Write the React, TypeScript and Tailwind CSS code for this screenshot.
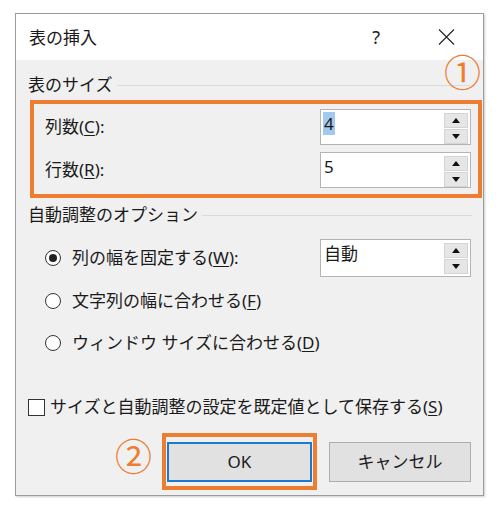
import React from "react";

const font = "font-['Noto_Sans','Noto_Sans_CJK_JP',sans-serif]";

function Spinner() {
  return (
    <div className="flex flex-col gap-px w-[24px] mt-[3px] mr-[2px]">
      <div className="h-[15px] bg-[#e6e6e6] border border-[#d4d4d4] flex items-center justify-center">
        <svg width="8" height="5" viewBox="0 0 8 5">
          <path d="M0 5 L4 0 L8 5 Z" fill="#111" />
        </svg>
      </div>
      <div className="h-[15px] bg-[#e6e6e6] border border-[#d4d4d4] flex items-center justify-center">
        <svg width="8" height="5" viewBox="0 0 8 5">
          <path d="M0 0 L8 0 L4 5 Z" fill="#111" />
        </svg>
      </div>
    </div>
  );
}

function NumberBox({ value, selected, h = 36 }: { value: string; selected?: boolean; h?: number }) {
  return (
    <div
      className={`w-[151px] ${h === 36 ? "h-[36px]" : "h-[38px]"} bg-white border border-[#b4b4b4] flex items-start justify-between`}
    >
      <span className="text-[17px] leading-[24px] mt-[2px] ml-[2px]">
        <span className={selected ? "bg-[#a2caee] px-[1px]" : "px-[1px]"}>{value}</span>
      </span>
      <Spinner />
    </div>
  );
}

function GroupHeader({ label, lineRight }: { label: string; lineRight: string }) {
  return (
    <div className="relative h-[24px] flex items-center pl-[12px]">
      <span className="text-[17px] leading-[24px] whitespace-nowrap">{label}</span>
      <div className={`flex-1 h-px bg-[#dadada] ml-[4px] ${lineRight}`} />
    </div>
  );
}

function Radio({ checked }: { checked?: boolean }) {
  return (
    <div className="w-[16px] h-[16px] rounded-full border border-[#333] bg-white flex items-center justify-center shrink-0">
      {checked && <div className="w-[8px] h-[8px] rounded-full bg-[#222]" />}
    </div>
  );
}

export default function App() {
  return (
    <div className={`w-[501px] h-[512px] bg-white pt-[13px] pl-[15px] text-[#1a1a1a] ${font}`}>
      <div className="w-[469px] h-[483px] border border-[#9c9c9c] flex flex-col shadow-[1px_1px_2px_rgba(0,0,0,0.2)]">
        {/* title bar */}
        <div className="h-[46px] bg-white flex items-center pl-[13px] pr-[28px]">
          <span className="text-[17px] leading-none">表の挿入</span>
          <span className="ml-auto mr-[58px] text-[18px] leading-none text-[#222]">?</span>
          <svg width="17" height="16" viewBox="0 0 17 16">
            <path d="M1 0.5 L16 15.5 M16 0.5 L1 15.5" stroke="#222" strokeWidth="1.1" />
          </svg>
        </div>

        {/* body */}
        <div className="flex-1 bg-[#f0f0f0] flex flex-col">
          <div className="relative mt-[13px]">
            <GroupHeader label="表のサイズ" lineRight="mr-[13px]" />
            <span className="absolute right-[2px] top-[-19px] text-[37px] leading-none text-[#ed7d31]">①</span>
          </div>

          <div className="mt-[3px] ml-[14px] w-[452px] h-[98px] border-4 border-[#ed7d31] pt-[5px] pl-[11px] pr-[7px] flex flex-col gap-[7px]">
            <div className="h-[36px] flex items-center justify-between">
              <span className="text-[17px]">
                列数(<span className="underline underline-offset-2">C</span>):
              </span>
              <NumberBox value="4" selected />
            </div>
            <div className="h-[36px] flex items-center justify-between">
              <span className="text-[17px]">
                行数(<span className="underline underline-offset-2">R</span>):
              </span>
              <NumberBox value="5" />
            </div>
          </div>

          <div className="mt-[5px]">
            <GroupHeader label="自動調整のオプション" lineRight="mr-[11px]" />
          </div>

          <div className="mt-[12px] h-[38px] flex items-center pl-[29px] pr-[12px]">
            <Radio checked />
            <span className="ml-[11px] text-[17px]">
              列の幅を固定する(<span className="underline underline-offset-2">W</span>):
            </span>
            <div className="ml-auto">
              <NumberBox value="自動" h={38} />
            </div>
          </div>

          <div className="mt-[12px] h-[24px] flex items-center pl-[29px]">
            <Radio />
            <span className="ml-[11px] text-[17px]">
              文字列の幅に合わせる(<span className="underline underline-offset-2">F</span>)
            </span>
          </div>

          <div className="mt-[18px] h-[24px] flex items-center pl-[29px]">
            <Radio />
            <span className="ml-[11px] text-[17px]">
              ウィンドウ サイズに合わせる(<span className="underline underline-offset-2">D</span>)
            </span>
          </div>

          <div className="mt-[40px] h-[24px] flex items-center pl-[12px]">
            <div className="w-[17px] h-[17px] border border-[#333] bg-white shrink-0" />
            <span className="ml-[5px] text-[17px] whitespace-nowrap">
              サイズと自動調整の設定を既定値として保存する(<span className="underline underline-offset-2">S</span>)
            </span>
          </div>

          <div className="mt-[14px] flex items-center justify-end pr-[12px]">
            <span className="text-[37px] leading-none text-[#ed7d31] mr-[10px] -mt-[10px]">②</span>
            <div className="w-[155px] h-[57px] border-4 border-[#ed7d31] flex items-center justify-center">
              <button className="w-[145px] h-[40px] bg-[#e1e1e1] border-2 border-[#1c7bd0] text-[17px]">
                OK
              </button>
            </div>
            <button className="ml-[12px] w-[142px] h-[40px] bg-[#e1e1e1] border border-[#adadad] text-[17px]">
              キャンセル
            </button>
          </div>
        </div>
      </div>
    </div>
  );
}
